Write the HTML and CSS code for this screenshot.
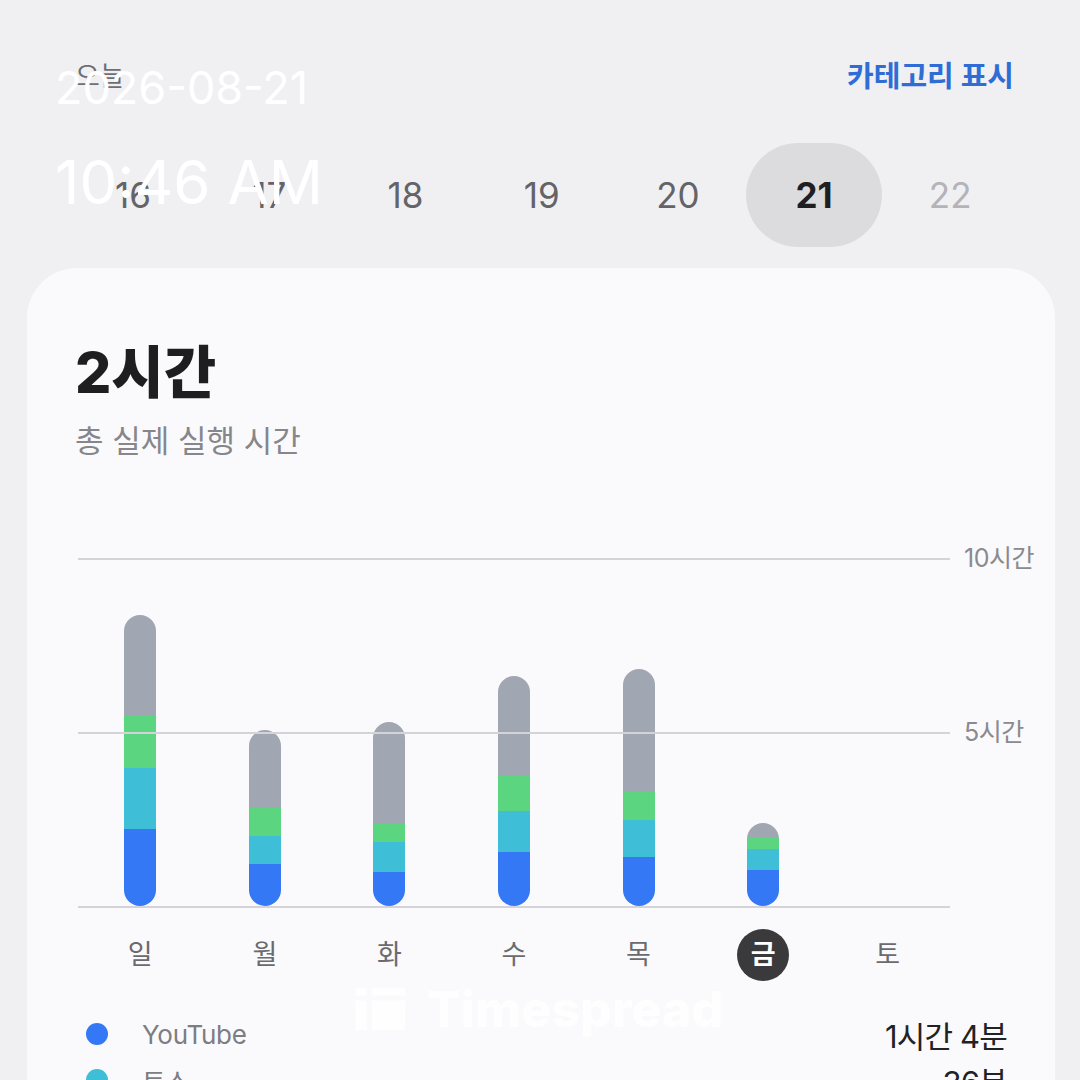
FILE: index.html
```html
<!doctype html>
<html lang="ko">
    <head>
        <meta charset="utf-8">
        <meta name="viewport" content="width=device-width, initial-scale=1.0">
        <title>스크린 타임</title>
        <link rel="stylesheet" href="styles.css">
    </head>
    <body>
        <header class="top">
            <p class="today">오늘</p>
            <a class="category" href="#">카테고리 표시</a>
        </header>
        <nav class="dates">
            <span class="date">16</span>
            <span class="date">17</span>
            <span class="date">18</span>
            <span class="date">19</span>
            <span class="date">20</span>
            <span class="date selected">21</span>
            <span class="date future">22</span>
        </nav>

        <main class="card">
            <h1 class="total">2시간</h1>
            <p class="caption">총 실제 실행 시간</p>

            <div class="chart">
                <div class="plot">
                    <div class="col"><div class="bar">
                        <i class="other" style="height:100px"></i><i class="green" style="height:53px"></i><i class="teal" style="height:61px"></i><i class="blue" style="height:77px"></i>
                    </div></div>
                    <div class="col"><div class="bar">
                        <i class="other" style="height:77px"></i><i class="green" style="height:29px"></i><i class="teal" style="height:28px"></i><i class="blue" style="height:42px"></i>
                    </div></div>
                    <div class="col"><div class="bar">
                        <i class="other" style="height:102px"></i><i class="green" style="height:18px"></i><i class="teal" style="height:30px"></i><i class="blue" style="height:34px"></i>
                    </div></div>
                    <div class="col"><div class="bar">
                        <i class="other" style="height:100px"></i><i class="green" style="height:35px"></i><i class="teal" style="height:41px"></i><i class="blue" style="height:54px"></i>
                    </div></div>
                    <div class="col"><div class="bar">
                        <i class="other" style="height:123px"></i><i class="green" style="height:28px"></i><i class="teal" style="height:37px"></i><i class="blue" style="height:49px"></i>
                    </div></div>
                    <div class="col"><div class="bar">
                        <i class="other" style="height:14px"></i><i class="green" style="height:12px"></i><i class="teal" style="height:21px"></i><i class="blue" style="height:36px"></i>
                    </div></div>
                    <div class="col"></div>
                </div>
                <div class="scale">
                    <span>10시간</span>
                    <span>5시간</span>
                </div>
                <div class="days">
                    <span>일</span>
                    <span>월</span>
                    <span>화</span>
                    <span>수</span>
                    <span>목</span>
                    <span class="current">금</span>
                    <span>토</span>
                </div>
            </div>

            <ul class="legend">
                <li><span class="dot blue"></span><span class="app">YouTube</span><span class="time">1시간 4분</span></li>
                <li><span class="dot teal"></span><span class="app">토스</span><span class="time">36분</span></li>
            </ul>
        </main>

        <!-- capture overlays -->
        <div class="stamp">
            <p class="stamp-date">2026-08-21</p>
            <p class="stamp-time">10:46 AM</p>
        </div>
        <div class="watermark">
            <svg width="58" height="42" viewBox="0 0 60 44">
                <rect x="0" y="0" width="12" height="8" fill="#fff"/>
                <rect x="0" y="13" width="12" height="31" fill="#fff"/>
                <rect x="17" y="0" width="35" height="8" fill="#fff"/>
                <rect x="17" y="13" width="35" height="31" fill="#fff"/>
            </svg>
            <span>Timespread</span>
        </div>
    </body>
</html>
```

FILE: styles.css
```css
* {
    padding: 0;
    margin: 0;
    box-sizing: border-box;
    font-family: Inter, "Noto Sans CJK KR", sans-serif;
}

body {
    width: 1080px;
    height: 1080px;
    overflow: hidden;
    background: #f0f0f3;
    position: relative;
}

a {
    text-decoration: none;
}

.top {
    display: flex;
    justify-content: space-between;
    align-items: center;
    padding: 54px 66px 0 75px;
    height: 94px;
}

.today {
    font-size: 27px;
    color: #6e6e73;
}

.category {
    font-size: 29px;
    font-weight: 700;
    color: #2f6dd5;
}

.dates {
    display: flex;
    margin: 49px 0 0 65px;
}

.date {
    width: 136.2px;
    height: 104px;
    border-radius: 52px;
    display: flex;
    align-items: center;
    justify-content: center;
    font-size: 35px;
    color: #636368;
}

.date.selected {
    background: #dcdcdf;
    color: #1f1f21;
    font-weight: 700;
}

.date.future {
    color: #b3b3b8;
}

.card {
    margin: 21px 25px 0 27px;
    height: 900px;
    background: #fafafc;
    border-radius: 50px;
    padding: 70px 0 0 48px;
}

.total {
    font-size: 57px;
    font-weight: 800;
    color: #1e1e20;
    line-height: 70px;
}

.caption {
    margin-top: 12px;
    font-size: 31px;
    color: #86868b;
    line-height: 42px;
}

.chart {
    margin: 96px 0 0 3px;
    display: grid;
    grid-template-columns: 872px auto;
    grid-template-rows: 350px auto;
}

.plot {
    height: 350px;
    border-top: 2px solid #d4d4d8;
    border-bottom: 2px solid #d4d4d8;
    display: flex;
    position: relative;
}

.plot::before {
    content: "";
    position: absolute;
    left: 0;
    right: 0;
    top: 172px;
    height: 2px;
    background: #d4d4d8;
}

.col {
    flex: 1;
    display: flex;
    justify-content: center;
    align-items: flex-end;
}

.bar {
    width: 32px;
    border-radius: 16px;
    overflow: hidden;
    display: flex;
    flex-direction: column;
}

.bar i {
    display: block;
}

.other { background: #a0a6b2; }
.green { background: #5bd57f; }
.teal { background: #3ebed7; }
.blue { background: #3478f6; }

.scale {
    display: flex;
    flex-direction: column;
    justify-content: space-between;
    height: 210px;
    margin: -20px 0 0 14px;
    font-size: 25px;
    color: #8a8a8f;
    letter-spacing: -0.5px;
}

.days {
    grid-column: 1;
    display: flex;
    margin-top: 21px;
}

.days span {
    flex: 1;
    display: flex;
    justify-content: center;
    font-size: 27px;
    color: #6a6a6f;
    line-height: 52px;
}

.days span.current {
    flex: 0 0 52px;
    margin: 0 36.3px;
    height: 52px;
    border-radius: 50%;
    background: #3a3a3c;
    color: #fff;
    font-weight: 700;
}

.legend {
    list-style: none;
    margin: 30px 0 0 11px;
    padding-right: 48px;
}

.legend li {
    display: flex;
    align-items: center;
    height: 46px;
}

.dot {
    width: 22px;
    height: 22px;
    border-radius: 50%;
    margin-right: 34px;
}

.app {
    font-size: 26px;
    color: #7d7d82;
    flex: 1;
    letter-spacing: -0.3px;
}

.time {
    font-size: 31px;
    color: #222224;
    letter-spacing: -0.8px;
}

.stamp {
    position: absolute;
    left: 55px;
    top: 58px;
    color: #fff;
}

.stamp-date {
    font-size: 45px;
    line-height: 60px;
}

.stamp-time {
    margin-top: 26px;
    font-size: 60px;
    line-height: 76px;
}

.watermark {
    position: absolute;
    left: 355px;
    top: 979px;
    display: flex;
    align-items: center;
    gap: 14px;
    opacity: 0.85;
}

.watermark span {
    font-size: 50px;
    font-weight: 800;
    color: #fff;
}
```
